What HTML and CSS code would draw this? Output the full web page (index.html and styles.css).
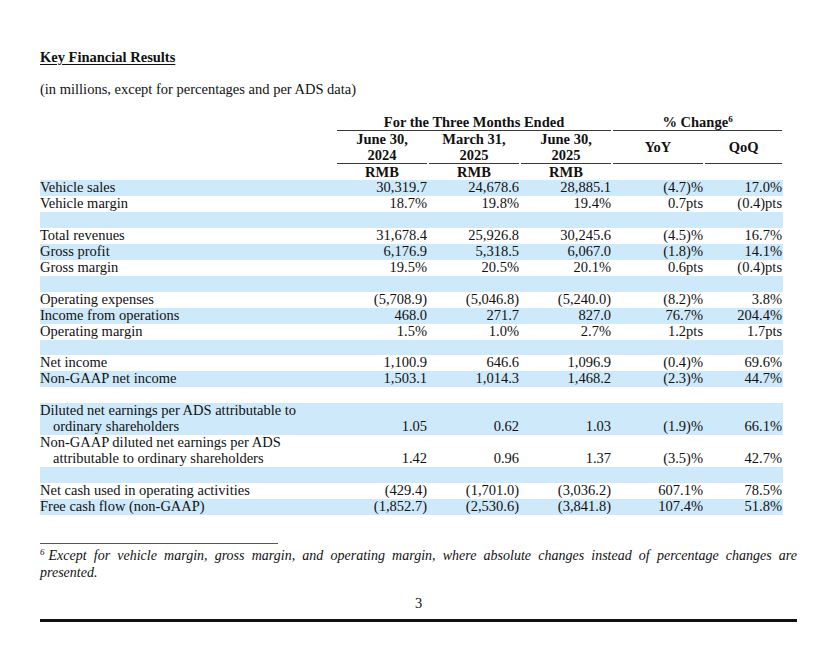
FILE: index.html
```
<!DOCTYPE html>
<html lang="en">
<head>
<meta charset="utf-8">
<title>Key Financial Results</title>
<link rel="stylesheet" href="styles.css">
</head>
<body>
<div class="page">
  <h1 class="title">Key Financial Results</h1>
  <p class="subtitle">(in millions, except for percentages and per ADS data)</p>

  <table class="fin">
    <colgroup>
      <col class="c-label">
      <col class="c-num">
      <col class="c-num">
      <col class="c-num">
      <col class="c-num">
      <col class="c-last">
    </colgroup>
    <thead>
      <tr class="h1">
        <th></th>
        <th colspan="3"><div class="hline">For the Three Months Ended</div></th>
        <th colspan="2"><div class="hline">% Change<sup>6</sup></div></th>
      </tr>
      <tr class="h2">
        <th></th>
        <th><div class="hline hdate">June 30,<br>2024</div></th>
        <th><div class="hline hdate">March 31,<br>2025</div></th>
        <th><div class="hline hdate">June 30,<br>2025</div></th>
        <th><div class="hline hdate">YoY</div></th>
        <th><div class="hline hdate">QoQ</div></th>
      </tr>
      <tr class="h3">
        <th></th>
        <th>RMB</th>
        <th>RMB</th>
        <th>RMB</th>
        <th></th>
        <th></th>
      </tr>
    </thead>
    <tbody>
      <tr class="b"><td>Vehicle sales</td><td>30,319.7</td><td>24,678.6</td><td>28,885.1</td><td>(4.7)%</td><td>17.0%</td></tr>
      <tr><td>Vehicle margin</td><td>18.7%</td><td>19.8%</td><td>19.4%</td><td>0.7pts</td><td>(0.4)pts</td></tr>
      <tr class="b"><td></td><td></td><td></td><td></td><td></td><td></td></tr>
      <tr><td>Total revenues</td><td>31,678.4</td><td>25,926.8</td><td>30,245.6</td><td>(4.5)%</td><td>16.7%</td></tr>
      <tr class="b"><td>Gross profit</td><td>6,176.9</td><td>5,318.5</td><td>6,067.0</td><td>(1.8)%</td><td>14.1%</td></tr>
      <tr><td>Gross margin</td><td>19.5%</td><td>20.5%</td><td>20.1%</td><td>0.6pts</td><td>(0.4)pts</td></tr>
      <tr class="b"><td></td><td></td><td></td><td></td><td></td><td></td></tr>
      <tr><td>Operating expenses</td><td>(5,708.9)</td><td>(5,046.8)</td><td>(5,240.0)</td><td>(8.2)%</td><td>3.8%</td></tr>
      <tr class="b"><td>Income from operations</td><td>468.0</td><td>271.7</td><td>827.0</td><td>76.7%</td><td>204.4%</td></tr>
      <tr><td>Operating margin</td><td>1.5%</td><td>1.0%</td><td>2.7%</td><td>1.2pts</td><td>1.7pts</td></tr>
      <tr class="b"><td></td><td></td><td></td><td></td><td></td><td></td></tr>
      <tr><td>Net income</td><td>1,100.9</td><td>646.6</td><td>1,096.9</td><td>(0.4)%</td><td>69.6%</td></tr>
      <tr class="b"><td>Non-GAAP net income</td><td>1,503.1</td><td>1,014.3</td><td>1,468.2</td><td>(2.3)%</td><td>44.7%</td></tr>
      <tr><td></td><td></td><td></td><td></td><td></td><td></td></tr>
      <tr class="b"><td class="hang">Diluted net earnings per ADS attributable to ordinary shareholders</td><td>1.05</td><td>0.62</td><td>1.03</td><td>(1.9)%</td><td>66.1%</td></tr>
      <tr><td class="hang">Non-GAAP diluted net earnings per ADS attributable to ordinary shareholders</td><td>1.42</td><td>0.96</td><td>1.37</td><td>(3.5)%</td><td>42.7%</td></tr>
      <tr class="b"><td></td><td></td><td></td><td></td><td></td><td></td></tr>
      <tr><td>Net cash used in operating activities</td><td>(429.4)</td><td>(1,701.0)</td><td>(3,036.2)</td><td>607.1%</td><td>78.5%</td></tr>
      <tr class="b"><td>Free cash flow (non-GAAP)</td><td>(1,852.7)</td><td>(2,530.6)</td><td>(3,841.8)</td><td>107.4%</td><td>51.8%</td></tr>
    </tbody>
  </table>

  <div class="footnote-rule"></div>
  <div class="footnote">
    <p class="fn-line fn-first"><sup class="fn-mark">6</sup>Except for vehicle margin, gross margin, and operating margin, where absolute changes instead of percentage changes are</p>
    <p class="fn-line">presented.</p>
  </div>

  <div class="page-no">3</div>
  <div class="page-rule"></div>
</div>
</body>
</html>
```

FILE: styles.css
```
html, body {
  margin: 0;
  padding: 0;
  background: #ffffff;
}

body {
  font-family: "Liberation Serif", "Times New Roman", serif;
  font-size: 14.5px;
  line-height: 16px;
  color: #111111;
}

.page {
  width: 757px;
  padding: 49px 0 0 40px;
}

.title {
  margin: 0;
  font-size: 14.5px;
  line-height: 16px;
  font-weight: bold;
  text-decoration: underline;
  text-underline-offset: 2px;
}

.subtitle {
  margin: 16px 0 0 0;
}

.fin {
  margin-top: 17px;
  width: 743px;
  border-collapse: collapse;
  table-layout: fixed;
}

.c-label { width: 296px; }
.c-num { width: 92px; }
.c-last { width: 79px; }

.fin th {
  padding: 0;
  font-weight: bold;
  text-align: center;
  line-height: 16px;
  vertical-align: bottom;
}

.fin sup {
  font-size: 9px;
  line-height: 0;
  vertical-align: 5px;
}

.hline {
  border-bottom: 1px solid #3a3a3a;
  margin: 0 1px 0 1px;
}

.h1 .hline {
  height: 16px;
}

.hdate {
  height: 32px;
  display: flex;
  flex-direction: column;
  align-items: center;
  justify-content: center;
}

.h3 th {
  height: 16px;
  line-height: 16px;
}

.fin td {
  padding: 0 1px 0 0;
  height: 15.95px;
  line-height: 15.95px;
  text-align: right;
  vertical-align: bottom;
  white-space: nowrap;
}

.fin td:first-child {
  text-align: left;
  white-space: normal;
}

.fin td.hang {
  padding-left: 13px;
  text-indent: -13px;
  padding-right: 20px;
}

.fin tr.b td {
  background: #cde9fa;
}

.footnote-rule {
  width: 238px;
  height: 0;
  border-top: 1px solid #555555;
  margin-top: 28px;
}

.footnote {
  margin-top: 3px;
  font-style: italic;
  font-size: 14px;
  line-height: 17px;
}

.fn-line {
  margin: 0;
  white-space: nowrap;
}

.fn-first {
  text-align: justify;
  text-align-last: justify;
}

.fn-mark {
  font-size: 9px;
  line-height: 0;
  vertical-align: 5px;
  margin-right: 4px;
}

.page-no {
  margin-top: 14px;
  text-align: center;
  line-height: 16px;
}

.page-rule {
  margin-top: 8px;
  height: 3px;
  background: #111111;
}
```
